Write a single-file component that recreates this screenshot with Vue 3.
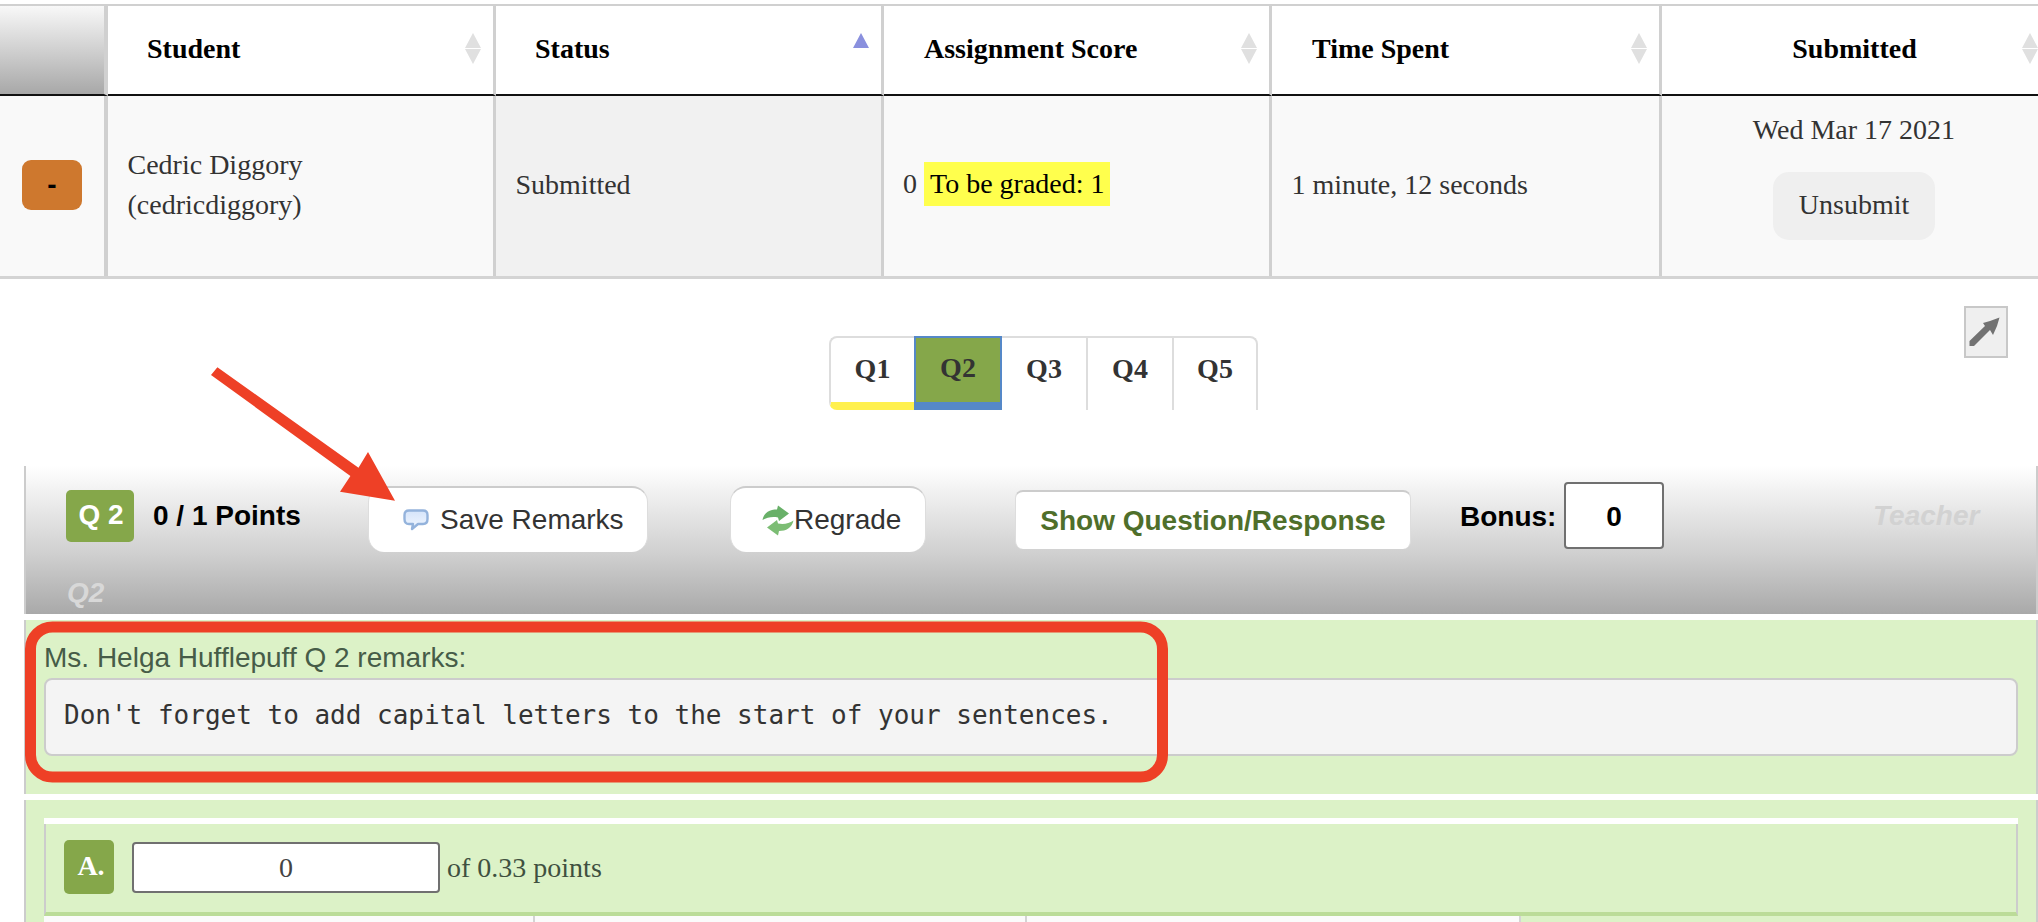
<script setup>
const headers = [
  { label: 'Student', sort: 'both' },
  { label: 'Status', sort: 'asc' },
  { label: 'Assignment Score', sort: 'both' },
  { label: 'Time Spent', sort: 'both' },
  { label: 'Submitted', sort: 'both', center: true }
]
const tabs = [
  { label: 'Q1', cls: 'seen' },
  { label: 'Q2', cls: 'active' },
  { label: 'Q3', cls: 'w86' },
  { label: 'Q4', cls: 'w86' },
  { label: 'Q5', cls: 'last' }
]
</script>

<template>
  <div class="page">
    <div class="table">
      <div class="th corner"></div>
      <div v-for="h in headers" :key="h.label" class="th" :class="{ center: h.center }">
        <span>{{ h.label }}</span>
        <i class="up" :class="{ on: h.sort === 'asc' }"></i>
        <i v-if="h.sort === 'both'" class="down"></i>
      </div>
      <div class="td tool"><button class="expand">-</button></div>
      <div class="td">Cedric Diggory<br />(cedricdiggory)</div>
      <div class="td sorted">Submitted</div>
      <div class="td score"><span class="zero">0</span><mark class="grade">To be graded: 1</mark></div>
      <div class="td">1 minute, 12 seconds</div>
      <div class="td submitted">
        <div>Wed Mar 17 2021</div>
        <button class="unsubmit">Unsubmit</button>
      </div>
    </div>

    <div class="tab-row">
      <div class="tabs">
        <div v-for="t in tabs" :key="t.label" class="tab" :class="t.cls">{{ t.label }}</div>
      </div>
      <div class="popout">
        <svg width="39" height="47" viewBox="0 0 39 47">
          <path d="M3.5 33 L19 18 L17 15 L24 13 L33.5 9.5 L31 18 L27 27 L24 22 L8 38 L3.5 38 Z" fill="#727272" />
        </svg>
      </div>
    </div>

    <section class="bar">
      <div class="bar-row">
        <div class="badge">Q 2</div>
        <div class="points">0 / 1 Points</div>
        <button class="btn save">
          <svg class="bubble" width="26" height="22" viewBox="0 0 26 22">
            <defs>
              <linearGradient id="bub" x1="0" y1="0" x2="0" y2="1">
                <stop offset="0" stop-color="#d5e4fa" />
                <stop offset="1" stop-color="#f2f7ff" />
              </linearGradient>
            </defs>
            <path d="M6 1.5 H20 Q24.5 1.5 24.5 6 V10 Q24.5 15 20 15 H15 L9 20 L10 15 H6 Q1.5 15 1.5 10 V6 Q1.5 1.5 6 1.5 Z" fill="url(#bub)" stroke="#94b3dc" stroke-width="2.4" stroke-linejoin="round" />
          </svg>
          <span>Save Remarks</span>
        </button>
        <button class="btn regrade">
          <svg class="sync" width="32" height="31" viewBox="0 0 32 31">
            <path d="M0.5 15 C2 7 8 4.5 15 4.5 L16 0.5 L27 8.5 L17 16 L16 12.5 C10 11.5 5 12.5 0.5 15 Z" fill="#68b068" />
            <path d="M31.5 15.5 C30 23 24 26 17 26 L16 30.5 L5 22.5 L15 15 L16 18.5 C22 19.5 27 18.5 31.5 15.5 Z" fill="#7cbd74" />
          </svg>
          <span>Regrade</span>
        </button>
        <button class="show">Show Question/Response</button>
        <label class="bonus">Bonus:</label>
        <div class="bonus-input">0</div>
        <div class="ghost teacher">Teacher</div>
      </div>
      <div class="ghost q-ghost">Q2</div>
    </section>

    <section class="green remarks">
      <div class="remarks-label">Ms. Helga Hufflepuff Q 2 remarks:</div>
      <div class="remarks-box">Don't forget to add capital letters to the start of your sentences.</div>
    </section>

    <section class="green part">
      <div class="part-inner">
        <div class="part-head">
          <div class="letter">A.</div>
          <div class="part-input">0</div>
          <div class="part-of">of 0.33 points</div>
        </div>
        <div class="part-table">
          <div class="cell c1"></div>
          <div class="cell c2"></div>
          <div class="cell c3"></div>
        </div>
      </div>
    </section>

    <svg class="overlay" width="2038" height="922" viewBox="0 0 2038 922">
      <rect x="30.5" y="627" width="1132" height="150" rx="22" fill="none" stroke="#ee4026" stroke-width="11" />
      <polygon points="217.4,367.3 211,375 350.4,476 340,491.7 395,500.7 368,452 358.5,467.7" fill="#ee4026" />
    </svg>
  </div>
</template>

<style scoped>
.page {
  position: relative;
  width: 2038px;
  height: 922px;
  overflow: hidden;
  background: #fff;
  font-family: "Liberation Sans", Arial, sans-serif;
  font-size: 28px;
  color: #333;
}
.table {
  display: grid;
  grid-template-columns: 108px 388px 388px 388px 390px 376px;
  grid-template-rows: 90px 180px;
  margin-top: 4px;
  border-top: 2px solid #d0d0d0;
  border-bottom: 3px solid #d4d4d4;
  font-family: "Liberation Serif", "Times New Roman", serif;
}
.th {
  position: relative;
  box-sizing: border-box;
  display: flex;
  align-items: center;
  padding: 0 40px 3px;
  font-weight: 700;
  color: #000;
  border-right: 3px solid #d0d0d0;
  border-bottom: 2px solid #111;
}
.th:nth-child(2), .th:nth-child(3) { padding-left: 39px; }
.th:nth-child(6) { border-right: 0; }
.th.center { justify-content: center; padding-left: 9px; padding-right: 0; }
.corner {
  border-right-width: 4px;
  background: linear-gradient(#f8f8f8, #a8a8a8);
}
.up, .down {
  position: absolute;
  right: 12px;
  width: 0;
  height: 0;
  border-left: 8.5px solid transparent;
  border-right: 8.5px solid transparent;
}
.th:nth-child(6) .up, .th:nth-child(6) .down { right: 0; }
.up { top: 27px; border-bottom: 15px solid #e0e0e0; }
.up.on { border-bottom-color: #8a90de; }
.down { top: 43px; border-top: 15px solid #e0e0e0; }
.td {
  box-sizing: border-box;
  display: flex;
  flex-direction: column;
  justify-content: center;
  align-items: flex-start;
  padding: 0 19.5px 2px;
  line-height: 40px;
  background: #f9f9f9;
  border-right: 3px solid #d0d0d0;
  color: #333;
}
.tool {
  border-right-width: 4px;
  padding: 0 0 2px 22px;
}
.expand {
  width: 60px;
  height: 50px;
  padding: 0;
  border: 0;
  border-radius: 9px;
  background: #ce782e;
  color: #000;
  font: 700 28px/50px "Liberation Sans", Arial, sans-serif;
}
.sorted { background: #f1f1f1; }
.score {
  flex-direction: row;
  align-items: center;
  justify-content: flex-start;
  padding: 0 0 4px 19px;
}
.zero { margin-right: 7px; }
.grade {
  display: block;
  width: 186px;
  height: 44px;
  box-sizing: border-box;
  padding-left: 6px;
  line-height: 44px;
  background: #ffff4d;
  color: #000;
  white-space: nowrap;
}
.submitted {
  align-items: center;
  justify-content: flex-start;
  padding: 14px 0 0 8px;
  border-right: 0;
}
.unsubmit {
  width: 162px;
  height: 68px;
  margin-top: 22px;
  padding: 0 0 2px;
  border: 0;
  border-radius: 16px;
  background: #efefef;
  color: #333;
  font: 28px "Liberation Serif", "Times New Roman", serif;
}

.tab-row {
  display: flex;
  align-items: flex-start;
  margin-top: 27px;
}
.tabs {
  display: flex;
  height: 74px;
  margin-top: 30px;
  margin-left: 829px;
}
.tab {
  box-sizing: border-box;
  width: 86px;
  height: 74px;
  padding-bottom: 8px;
  border-top: 2px solid #ddd;
  border-right: 2px solid #ddd;
  font: 700 28px/62px "Liberation Serif", "Times New Roman", serif;
  text-align: center;
  color: #333;
}
.tab.seen {
  width: 85px;
  border-left: 2px solid #ddd;
  border-right: 0;
  border-bottom: 8px solid #fff04d;
  padding-bottom: 0;
  border-radius: 8px 0 0 8px;
}
.tab.active {
  width: 88px;
  background: #85a74a;
  border: 2px solid #5588c8;
  border-bottom-width: 8px;
  padding-bottom: 0;
  line-height: 60px;
}
.tab.last { width: 84px; border-top-right-radius: 8px; }
.popout {
  box-sizing: border-box;
  width: 44px;
  height: 52px;
  margin-left: auto;
  margin-right: 30px;
  border: 2.5px solid #c8c8c8;
  background: #efefef;
}
.popout svg { display: block; filter: blur(0.5px); }

.bar {
  box-sizing: border-box;
  height: 148px;
  margin: 56px 0 0 24px;
  padding: 16px 0 0 40px;
  border-left: 2px solid #ccc;
  border-right: 2px solid #ccc;
  background: linear-gradient(#ffffff 0%, #cfcfcf 60%, #a9a9a9 100%);
}
.bar-row {
  display: flex;
  align-items: flex-start;
  height: 67px;
  font-weight: 400;
}
.badge {
  width: 68px;
  height: 52px;
  margin-top: 8px;
  padding-left: 2px;
  box-sizing: border-box;
  border-radius: 5px;
  background: #85a74a;
  color: #fff;
  font-weight: 700;
  line-height: 50px;
  text-align: center;
}
.points {
  width: 148px;
  margin: 9px 0 0 19px;
  font-weight: 700;
  line-height: 50px;
  color: #000;
  white-space: nowrap;
}
.btn {
  box-sizing: border-box;
  display: flex;
  align-items: center;
  height: 66px;
  margin-top: 4px;
  padding: 0;
  border: 0;
  border-top: 2px solid #ccc;
  border-left: 1px solid #ddd;
  border-right: 1px solid #ddd;
  border-radius: 16px;
  background: #fff;
  color: #333;
  font: 28px "Liberation Sans", Arial, sans-serif;
}
.save {
  width: 280px;
  margin-left: 67px;
  padding-left: 34px;
}
.bubble { margin-right: 11px; }
.regrade {
  width: 196px;
  margin-left: 82px;
  padding-left: 31px;
}
.sync { flex: none; filter: blur(0.4px); }
.show {
  box-sizing: border-box;
  width: 396px;
  height: 59px;
  margin: 8px 0 0 89px;
  padding: 0;
  border: 0;
  border-top: 2px solid #ccc;
  border-left: 1px solid #ddd;
  border-right: 1px solid #ddd;
  border-radius: 8px;
  background: #fff;
  color: #4f6f2b;
  font: 700 28px "Liberation Sans", Arial, sans-serif;
}
.bonus {
  width: 97px;
  margin: 15px 0 0 49px;
  font-weight: 700;
  line-height: 40px;
  color: #000;
}
.bonus-input {
  box-sizing: border-box;
  width: 100px;
  height: 67px;
  margin-left: 7px;
  border: 2px solid #707070;
  border-radius: 4px;
  background: #fff;
  color: #000;
  font-weight: 700;
  line-height: 66px;
  text-align: center;
}
.ghost {
  font-weight: 700;
  font-style: italic;
  color: #d2d2d2;
}
.teacher { margin: 14px 0 0 209px; line-height: 40px; }
.q-ghost { margin: 28px 0 0 1px; line-height: 32px; color: #d8d8d8; }

.green {
  margin-left: 24px;
  border-left: 2px solid #ccc;
  border-right: 2px solid #ccc;
  background: #dcf2c7;
}
.remarks {
  box-sizing: border-box;
  height: 174px;
  margin-top: 6px;
  padding: 18px 18px 0;
}
.remarks-label {
  line-height: 40px;
  color: #465c48;
}
.remarks-box {
  box-sizing: border-box;
  height: 78px;
  padding: 17px 18px 0;
  border: 2px solid #ccc;
  border-radius: 8px;
  background: #f4f4f4;
  font: 26px/36px "DejaVu Sans Mono", "Liberation Mono", monospace;
  color: #333;
  white-space: nowrap;
}
.part {
  height: 122px;
  margin-top: 6px;
  padding: 18px 18px 0;
  box-sizing: border-box;
}
.part-inner {
  border-top: 6px solid #fff;
}
.part-head {
  box-sizing: border-box;
  display: flex;
  align-items: flex-start;
  height: 92px;
  padding: 16px 0 0 18px;
  border-left: 2px solid #ccc;
  border-right: 2px solid #ccc;
  border-bottom: 4px solid #bbdc98;
  font-family: "Liberation Serif", "Times New Roman", serif;
}
.letter {
  box-sizing: border-box;
  width: 50px;
  height: 54px;
  padding-left: 4px;
  border-radius: 5px;
  background: #85a74a;
  color: #fff;
  font-weight: 700;
  line-height: 52px;
  text-align: center;
}
.part-input {
  box-sizing: border-box;
  width: 308px;
  height: 51px;
  margin: 2px 0 0 18px;
  border: 2px solid #707070;
  border-radius: 4px;
  background: #fff;
  line-height: 47px;
  text-align: center;
  color: #444;
}
.part-of {
  margin: 2px 0 0 7px;
  line-height: 52px;
  color: #3f5040;
}
.part-table { display: flex; }
.cell {
  box-sizing: border-box;
  height: 40px;
  background: #fbfbfb;
  border-right: 2px solid #d4d4d4;
}
.c1 { width: 491px; }
.c2 { width: 492px; }
.c3 { width: 494px; }
.overlay {
  position: absolute;
  left: 0;
  top: 0;
  pointer-events: none;
}
</style>
